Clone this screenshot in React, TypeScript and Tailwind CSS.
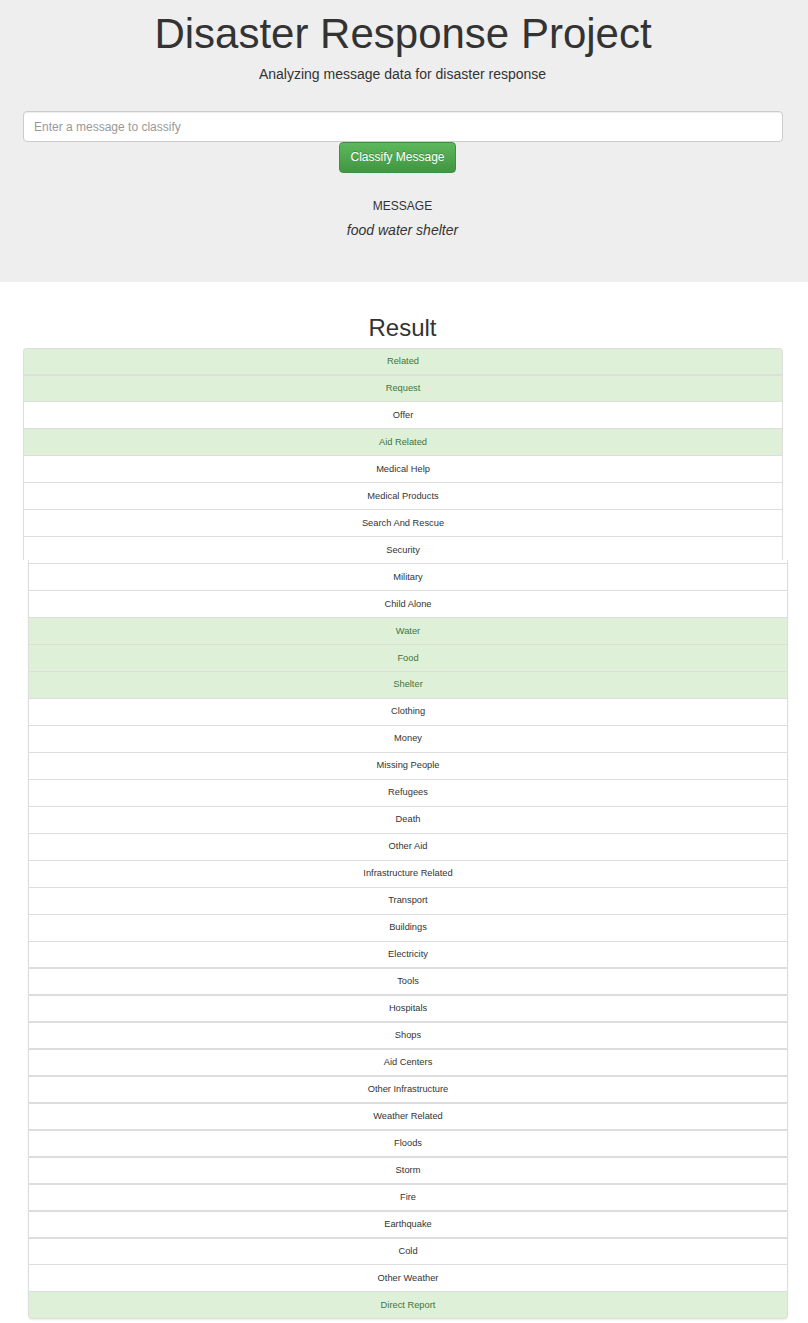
type Item = { label: string; on?: boolean; cls: string };

const base = "flex items-center justify-center border-x border-[#dddddd] text-[9.3px] leading-none ";

const first: Item[] = [
  { label: "Related", on: true, cls: "h-[26px] border-t pt-[1px] rounded-t-[4px]" },
  { label: "Request", on: true, cls: "h-[27px] border-t-2 pt-[1px]" },
  { label: "Offer", cls: "h-[27px] border-t pt-[2px]" },
  { label: "Aid Related", on: true, cls: "h-[27px] border-t pt-[2px]" },
  { label: "Medical Help", cls: "h-[27px] border-t pt-[2px]" },
  { label: "Medical Products", cls: "h-[27px] border-t pt-[2px]" },
  { label: "Search And Rescue", cls: "h-[27px] border-t pt-[2px]" },
  { label: "Security", cls: "h-[27px] border-t pt-[2px]" },
];

const second: Item[] = [
  { label: "Military", cls: "h-[27px] border-t pt-[2px]" },
  { label: "Child Alone", cls: "h-[27px] border-t pt-[2px]" },
  { label: "Water", on: true, cls: "h-[27px] border-t pt-[2px]" },
  { label: "Food", on: true, cls: "h-[27px] border-t pt-[2px]" },
  { label: "Shelter", on: true, cls: "h-[27px] border-t" },
  { label: "Clothing", cls: "h-[27px] border-t" },
  { label: "Money", cls: "h-[27px] border-t" },
  { label: "Missing People", cls: "h-[27px] border-t" },
  { label: "Refugees", cls: "h-[27px] border-t" },
  { label: "Death", cls: "h-[27px] border-t" },
  { label: "Other Aid", cls: "h-[27px] border-t" },
  { label: "Infrastructure Related", cls: "h-[27px] border-t" },
  { label: "Transport", cls: "h-[27px] border-t" },
  { label: "Buildings", cls: "h-[27px] border-t" },
  { label: "Electricity", cls: "h-[26px] border-t pt-[1px]" },
  { label: "Tools", cls: "h-[27px] border-t-2 pt-[1px]" },
  { label: "Hospitals", cls: "h-[27px] border-t-2 pt-[1px]" },
  { label: "Shops", cls: "h-[27px] border-t-2 pt-[1px]" },
  { label: "Aid Centers", cls: "h-[27px] border-t-2 pt-[1px]" },
  { label: "Other Infrastructure", cls: "h-[27px] border-t-2 pt-[1px]" },
  { label: "Weather Related", cls: "h-[27px] border-t-2 pt-[1px]" },
  { label: "Floods", cls: "h-[27px] border-t-2 pt-[1px]" },
  { label: "Storm", cls: "h-[27px] border-t-2 pt-[1px]" },
  { label: "Fire", cls: "h-[27px] border-t-2 pt-[1px]" },
  { label: "Earthquake", cls: "h-[27px] border-t-2 pt-[1px]" },
  { label: "Cold", cls: "h-[27px] border-t-2 pt-[1px]" },
  { label: "Other Weather", cls: "h-[27px] border-t pt-[2px]" },
  { label: "Direct Report", on: true, cls: "h-[28px] border-y pt-[2px] rounded-b-[4px]" },
];

function Row({ item }: { item: Item }) {
  return (
    <div className={base + (item.on ? "bg-[#dff0d8] text-[#3c763d] " : "bg-white text-[#333333] ") + item.cls}>
      {item.label}
    </div>
  );
}

export default function App() {
  return (
    <div className="h-[1323px] w-[808px] overflow-hidden bg-white font-['Liberation_Sans',Arial,sans-serif] text-[#333333]">
      <div className="flex h-[282px] flex-col items-center bg-[#eeeeee] px-[23px]">
        <h1 className="mt-[11px] pr-[2px] text-[42px] leading-[46px] font-normal">Disaster Response Project</h1>
        <p className="mt-[7px] pr-[3px] text-[14px] leading-[20px]">Analyzing message data for disaster response</p>
        <input
          placeholder="Enter a message to classify"
          className="mt-[27px] h-[31px] w-[760px] shrink-0 self-start rounded-[4px] border border-[#cccccc] bg-white px-[10px] text-[12px] text-[#555555] shadow-[inset_0_1px_1px_rgba(0,0,0,0.075)] placeholder:text-[#999999]"
        />
        <button className="ml-[316px] h-[31px] w-[117px] shrink-0 self-start rounded-[4px] border border-[#3e8f3e] bg-gradient-to-b from-[#5cb85c] to-[#419641] pb-[2px] text-[12px] text-white [text-shadow:0_-1px_0_rgba(0,0,0,0.2)]">
          Classify Message
        </button>
        <div className="mt-[25px] pr-[3px] text-[12px] leading-[17px]">MESSAGE</div>
        <div className="mt-[5px] pr-[3px] text-[14px] leading-[20px] italic">food water shelter</div>
      </div>
      <h2 className="mt-[33px] h-[33px] pr-[3px] text-center text-[24px] leading-[26px] font-normal">Result</h2>
      <div className="ml-[23px] h-[212px] w-[760px] overflow-hidden">
        {first.map((item) => (
          <Row key={item.label} item={item} />
        ))}
      </div>
      <div className="ml-[28px] w-[760px] rounded-b-[4px] shadow-[0_1px_2px_rgba(0,0,0,0.075)]">
        <div className="h-[3px] border-x border-[#dddddd]" />
        {second.map((item) => (
          <Row key={item.label} item={item} />
        ))}
      </div>
    </div>
  );
}
